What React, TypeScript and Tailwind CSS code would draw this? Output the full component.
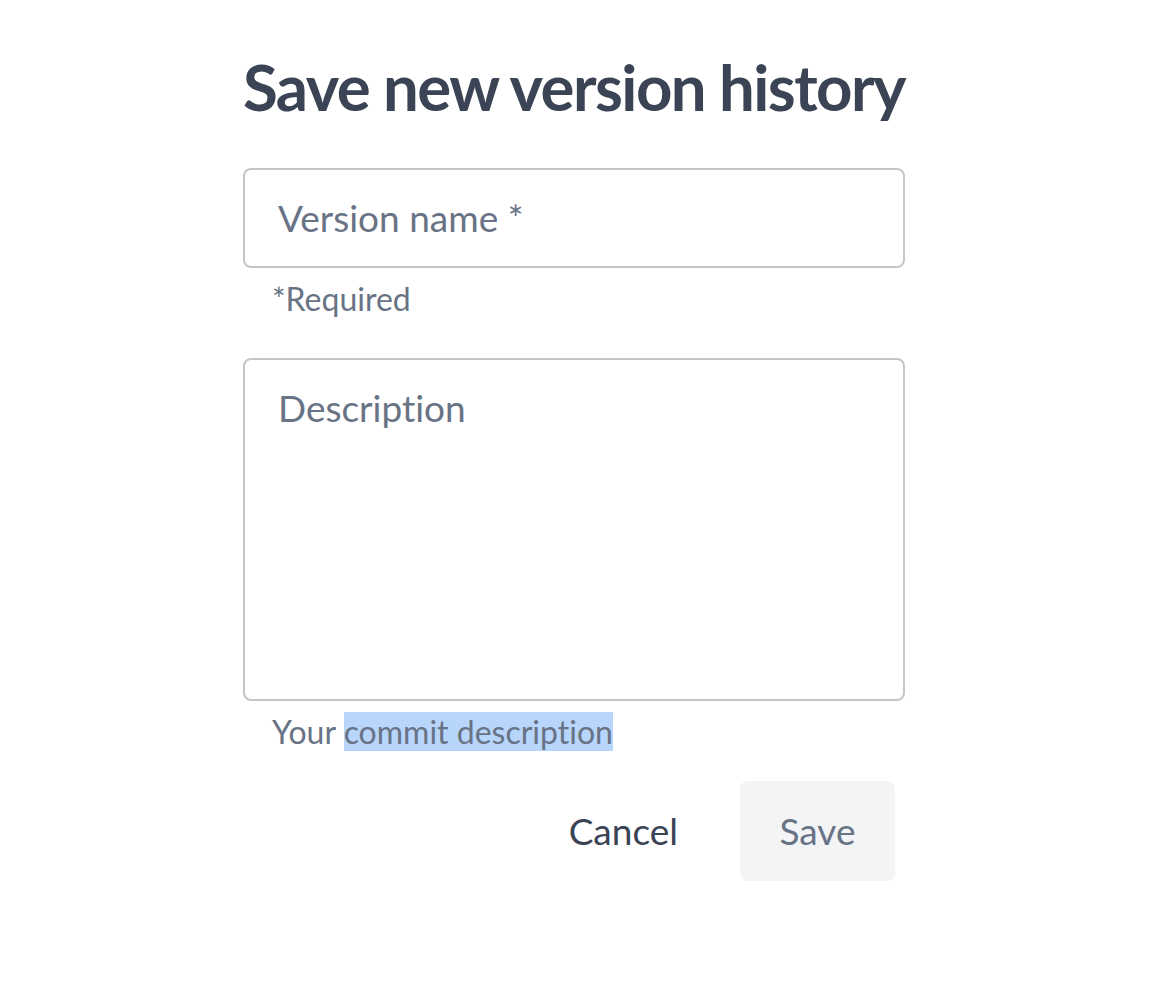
import React from "react";

export default function App() {
  return (
    <div className="min-h-[988px] w-full bg-white font-['Lato',sans-serif] [font-variant-ligatures:none]">
      <div className="ml-[243px] w-[662px] pt-[50px]">
        <h1 className="text-[63.5px] font-bold leading-[74px] text-[#3b4455] tracking-[-1.55px] whitespace-nowrap">
          Save new version history
        </h1>
        <div className="mt-[44px] h-[100px] rounded-[8px] border-2 border-[#c6c6c6] flex items-center px-[33px]">
          <span className="text-[37px] text-[#687385]">Version name *</span>
        </div>
        <div className="mt-[12px] pl-[29px] text-[32px] leading-[38px] text-[#687385]">*Required</div>
        <div className="mt-[40px] h-[343px] rounded-[8px] border-2 border-[#c6c6c6] px-[33px] pt-[25px]">
          <span className="text-[37px] text-[#687385] leading-[46px]">Description</span>
        </div>
        <div className="mt-[12px] pl-[29px] text-[32px] leading-[38px] text-[#687385]">
          Your <span className="bg-[#b8d6fb]">commit description</span>
        </div>
        <div className="mt-[30px] flex justify-end items-center pr-[10px]">
          <button className="text-[37px] text-[#3b4455] mr-[62px]">Cancel</button>
          <button className="w-[155px] h-[100px] rounded-[8px] bg-[#f3f4f6] text-[37px] text-[#687385]">Save</button>
        </div>
      </div>
    </div>
  );
}
